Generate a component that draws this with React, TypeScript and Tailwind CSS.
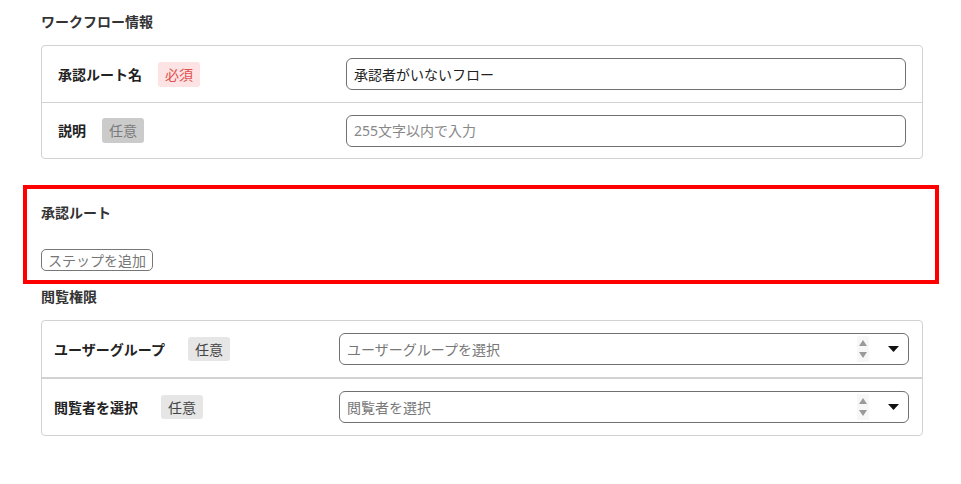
import React from 'react'

const font = {
  fontFamily: '"Noto Sans", "Noto Sans CJK JP", sans-serif',
}

const Badge = ({ kind }: { kind: 'required' | 'optional' | 'optionalLight' }) => {
  if (kind === 'required') {
    return (
      <span className="inline-flex h-[25px] w-[42px] items-center justify-center rounded-[3px] bg-[#fde3e3] text-[14px] text-[#e0514f]">
        必須
      </span>
    )
  }
  if (kind === 'optional') {
    return (
      <span className="inline-flex h-[25px] w-[42px] items-center justify-center rounded-[3px] bg-[#cbcbcb] text-[14px] text-[#7a7a7a]">
        任意
      </span>
    )
  }
  return (
    <span className="inline-flex h-[24px] w-[42px] items-center justify-center rounded-[3px] bg-[#e6e6e6] text-[14px] text-[#444]">
      任意
    </span>
  )
}

const SelectBox = ({ placeholder }: { placeholder: string }) => (
  <div className="flex h-[32px] flex-1 items-center rounded-[6px] border border-[#707070] bg-white pl-[7px] pr-[9px]">
    <span className="flex-1 text-[14px] text-[#777]">{placeholder}</span>
    <span className="flex h-[26px] w-[12px] flex-col items-center justify-center gap-[6px] bg-[#f7f7f7]">
      <svg width="8" height="6" viewBox="0 0 8 6">
        <path d="M4 0 L8 6 L0 6 Z" fill="#9a9a9a" />
      </svg>
      <svg width="8" height="6" viewBox="0 0 8 6">
        <path d="M0 0 L8 0 L4 6 Z" fill="#9a9a9a" />
      </svg>
    </span>
    <svg className="ml-[19px]" width="11" height="6" viewBox="0 0 11 6">
      <path d="M0 0 L11 0 L5.5 6 Z" fill="#111" />
    </svg>
  </div>
)

export default function App() {
  return (
    <div className="min-h-[484px] w-full bg-white text-[#222]" style={font}>
      <div className="pl-[41px] pr-[38px] pt-[12px]">
        <h2 className="text-[14px] font-bold leading-[20px] text-[#333]">ワークフロー情報</h2>

        <div className="mt-[13px] rounded-[4px] border border-[#d2d2d2]">
          <div className="flex h-[57px] items-center border-b border-[#d2d2d2] px-[16px]">
            <div className="flex w-[288px] items-center gap-[16px]">
              <span className="text-[14px] font-bold">承認ルート名</span>
              <Badge kind="required" />
            </div>
            <div className="flex h-[32px] flex-1 items-center rounded-[6px] border border-[#707070] px-[7px] text-[14px] text-[#222]">
              承認者がいないフロー
            </div>
          </div>
          <div className="flex h-[55px] items-center px-[16px]">
            <div className="flex w-[288px] items-center gap-[16px]">
              <span className="text-[14px] font-bold">説明</span>
              <Badge kind="optional" />
            </div>
            <div className="flex h-[32px] flex-1 items-center rounded-[6px] border border-[#707070] px-[7px] text-[14px] text-[#888]">
              255文字以内で入力
            </div>
          </div>
        </div>

        <section className="ml-[-18px] mr-[-16px] mt-[26px] border-4 border-[#ff0000] pb-[9px] pl-[14px] pt-[14px]">
          <h2 className="text-[14px] font-bold leading-[20px] text-[#333]">承認ルート</h2>
          <button className="mt-[26px] flex h-[22px] items-center rounded-[5px] border border-[#777] px-[6px] text-[14px] text-[#777]">
            ステップを追加
          </button>
        </section>

        <h2 className="mt-[3px] text-[14px] font-bold leading-[20px] text-[#333]">閲覧権限</h2>

        <div className="mt-[13px] rounded-[4px] border border-[#d2d2d2]">
          <div className="flex h-[58px] items-center border-b-2 border-[#d2d2d2] pl-[12px] pr-[13px]">
            <div className="flex w-[285px] items-center gap-[23px]">
              <span className="text-[14px] font-bold">ユーザーグループ</span>
              <Badge kind="optionalLight" />
            </div>
            <SelectBox placeholder="ユーザーグループを選択" />
          </div>
          <div className="flex h-[56px] items-center pl-[12px] pr-[13px]">
            <div className="flex w-[285px] items-center gap-[23px]">
              <span className="text-[14px] font-bold">閲覧者を選択</span>
              <Badge kind="optionalLight" />
            </div>
            <SelectBox placeholder="閲覧者を選択" />
          </div>
        </div>
      </div>
    </div>
  )
}
